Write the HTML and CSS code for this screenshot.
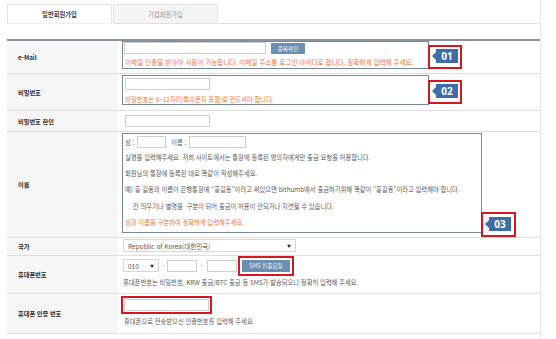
FILE: index.html
```html
<!DOCTYPE html>
<html lang="ko">

<head>
    <meta charset="utf-8">
    <meta name="viewport" content="width=device-width, initial-scale=1.0">
    <title>회원가입</title>
    <link rel="stylesheet" href="styles.css">
</head>

<body>
    <div class="page">
        <nav class="tabs">
            <button class="tab valgt">일반회원가입</button>
            <button class="tab">기업회원가입</button>
            <div class="tab-line"></div>
        </nav>

        <section class="form">
            <div class="row row-mail">
                <div class="label">e-Mail</div>
                <div class="cell">
                    <div class="box box-short">
                        <div class="line">
                            <input class="inp inp-mail" type="text">
                            <button class="btn btn-check">중복확인</button>
                        </div>
                        <p class="warn">이메일 인증을 받아야 사용이 가능합니다. 이메일 주소를 로그인 아이디로 합니다. 정확하게 입력해 주세요.</p>
                        <span class="badge badge-1"><b>01</b></span>
                    </div>
                </div>
            </div>

            <div class="row row-pw">
                <div class="label">비밀번호</div>
                <div class="cell">
                    <div class="box box-short">
                        <input class="inp inp-pw" type="password">
                        <p class="warn">비밀번호는 8~12자리(특수문자 포함)로 만드셔야 합니다.</p>
                        <span class="badge badge-2"><b>02</b></span>
                    </div>
                </div>
            </div>

            <div class="row row-pw2">
                <div class="label">비밀번호 확인</div>
                <div class="cell">
                    <input class="inp inp-pw" type="password">
                </div>
            </div>

            <div class="row row-name">
                <div class="label">이름</div>
                <div class="cell">
                    <div class="box box-long">
                        <div class="line">
                            <span>성 :</span>
                            <input class="inp inp-sung" type="text">
                            <span class="name-lbl">이름 :</span>
                            <input class="inp inp-ireum" type="text">
                        </div>
                        <div class="notes">
                            <p>실명을 입력해주세요. 저희 사이트에서는 통장에 등록된 명의자에게만 출금 요청을 허용합니다.</p>
                            <p>회원님의 통장에 등록된 대로 똑같이 작성해주세요.</p>
                            <p>예) 홍 길동의 이름이 은행통장에 "홍길동"이라고 써있으면 bithumb에서 출금하기위해 똑같이 "홍길동"이라고 입력해야 합니다.</p>
                            <p class="indent">칸 띄우기나 별명을&nbsp; 구분이 되어 출금이 허용이 안되거나 지연될 수 있습니다.</p>
                            <p class="warn">성과 이름을 구분하여 정확하게 입력해주세요.</p>
                        </div>
                        <span class="badge badge-3"><b>03</b></span>
                    </div>
                </div>
            </div>

            <div class="row row-country">
                <div class="label">국가</div>
                <div class="cell">
                    <div class="select select-country"><span>Republic of Korea(대한민국)</span><span class="arr">▼</span></div>
                </div>
            </div>

            <div class="row row-phone">
                <div class="label">휴대폰번호</div>
                <div class="cell">
                    <div class="line">
                        <div class="select select-010"><span>010</span><span class="arr">▼</span></div>
                        <span class="dash">-</span>
                        <input class="inp inp-tel" type="text">
                        <span class="dash">-</span>
                        <input class="inp inp-tel" type="text">
                        <button class="btn btn-sms mark">SMS 인증요청</button>
                    </div>
                    <p class="help">휴대폰번호는 비밀번호, KRW 출금/BTC 출금 등 SMS가 발송되오니 정확히 입력해 주세요.</p>
                </div>
            </div>

            <div class="row row-auth">
                <div class="label">휴대폰 인증 번호</div>
                <div class="cell">
                    <input class="inp inp-auth mark" type="text">
                    <p class="help">휴대폰으로 전송받으신 인증번호를 입력해 주세요.</p>
                </div>
            </div>
        </section>
    </div>
</body>

</html>
```

FILE: styles.css
```css
* {
    box-sizing: border-box;
}

body {
    margin: 0;
    background: #fff;
    font-family: "Noto Sans CJK KR", "Noto Sans", sans-serif;
    font-size: 6.3px;
    color: #5a5a5a;
}

p {
    margin: 0;
}

.page {
    width: 541px;
    height: 339px;
    padding: 4px 0 0 7px;
    border-right: 1px solid #e6e6e6;
}

/* tabs */

.tabs {
    display: flex;
    height: 20px;
}

.tab {
    width: 105px;
    padding: 0;
    font-family: inherit;
    font-size: 6.3px;
    color: #999;
    background: #f5f5f5;
    border: 1px solid #e4e4e4;
    border-bottom-color: #e0e0e0;
}

.tab.valgt {
    background: #fff;
    color: #444;
    font-weight: bold;
    border-bottom-color: #f0f0f0;
}

.tab + .tab {
    margin-left: 1px;
}

.tab-line {
    flex: 1;
    border-bottom: 1px solid #e0e0e0;
}

/* form table */

.form {
    margin-top: 15px;
    border-top: 2px solid #8793a0;
}

.row {
    display: grid;
    grid-template-columns: 111px 1fr;
    border-bottom: 1px solid #dedede;
}

.label {
    display: flex;
    align-items: center;
    padding-left: 11px;
    background: #f6f6f6;
    font-size: 6.2px;
    font-weight: bold;
    color: #2e2e2e;
}

.cell {
    padding-left: 4px;
}

.row-mail .cell {
    padding-bottom: 4px;
}

.row-pw .cell {
    padding: 1px 0 5px 4px;
}

.row-pw2 .cell {
    padding: 4px 0 4px 7px;
}

.row-name .cell {
    padding: 1px 0 4px 4px;
}

.row-country .cell {
    padding: 1px 0 3px 5px;
}

.row-phone .cell {
    padding: 3px 0 4px 5px;
}

.row-auth .cell {
    padding: 5px 0 5px 6px;
}

.box {
    position: relative;
    border: 1px solid #77889a;
    padding: 0 2px;
}

.box-short {
    width: 307px;
}

.box-long {
    width: 360px;
    padding: 2px 2px 1px;
}

.row-pw .box {
    padding-top: 2px;
}

.line {
    display: flex;
    align-items: center;
}

.inp {
    display: block;
    height: 12px;
    padding: 0;
    border: 1px solid #cfcfcf;
    background: #fff;
}

.inp-mail {
    width: 142px;
    margin-left: -1px;
}

.inp-pw {
    width: 85px;
}

.inp-sung {
    width: 29px;
    margin-left: 3px;
}

.name-lbl {
    margin-left: 5px;
}

.inp-ireum {
    width: 57px;
    margin-left: 3px;
}

.inp-tel {
    width: 30px;
}

.inp-auth {
    width: 85px;
}

.btn {
    padding: 0;
    border: 0;
    background: #6b8fb2;
    color: #f2f5f8;
    font-family: inherit;
    font-size: 5.6px;
}

.btn-check {
    width: 34px;
    height: 11px;
    margin-left: 5px;
    margin-top: 1px;
}

.btn-sms {
    width: 48px;
    height: 12px;
    margin-left: 5px;
}

.mark {
    outline: 2px solid #d31920;
    outline-offset: 2px;
}

.inp-auth.mark {
    outline-offset: 1px;
}

.warn {
    color: #ec7632;
}

.row-mail .warn {
    margin-top: 3px;
    font-size: 6.6px;
    line-height: 11px;
}

.row-pw .warn {
    margin-top: 5px;
    line-height: 9px;
}

.notes {
    margin-top: 2px;
    line-height: 16.2px;
}

.indent {
    padding-left: 8px;
}

.help {
    margin-top: 5px;
    line-height: 12px;
}

.select {
    display: flex;
    justify-content: space-between;
    align-items: center;
    height: 13px;
    padding: 0 4px 0 4px;
    border: 1px solid #d6d6d6;
    background: #fff;
    font-size: 6.5px;
    color: #555;
}

.select-country {
    width: 173px;
}

.select-010 {
    width: 36px;
}

.arr {
    font-size: 4px;
    color: #222;
}

.dash {
    width: 8px;
    text-align: center;
}

.dash + .inp-tel + .dash {
    width: 10px;
}

/* numbered markers */

.badge {
    position: absolute;
    left: 100%;
    width: 34px;
    height: 24px;
    border: 2px solid #d31920;
    background: #fff;
    padding: 2px 0 0 6px;
}

.badge-1 {
    top: 3px;
}

.badge-2 {
    top: 4px;
}

.badge-3 {
    top: 78px;
    width: 35px;
    height: 25px;
    padding-top: 3px;
}

.badge b {
    position: relative;
    display: block;
    width: 22px;
    height: 14px;
    background: #3d6ea7;
    color: #fff;
    font-family: "Open Sans", sans-serif;
    font-size: 10px;
    line-height: 14px;
    text-align: center;
}

.badge b::before {
    content: "";
    position: absolute;
    left: -4px;
    top: 3px;
    border-right: 4px solid #3d6ea7;
    border-top: 4px solid transparent;
    border-bottom: 4px solid transparent;
}
```
